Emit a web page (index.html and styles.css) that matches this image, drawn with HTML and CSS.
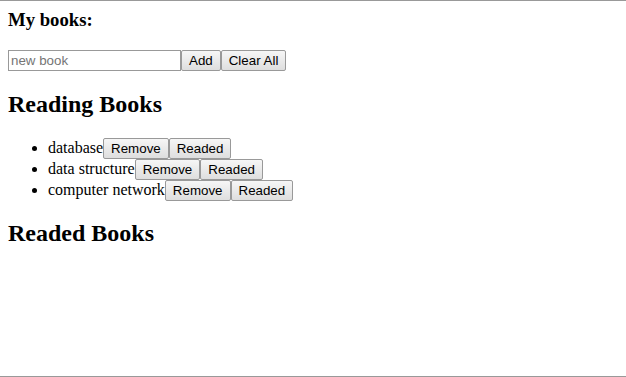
FILE: index.html
```html
<html>
<head>
    <title>My books</title>
    <link rel="stylesheet" href="styles.css">
</head>
<body>
<div class="page">
    <h3>My books:</h3>
    <div class="add-form">
        <input type="text" placeholder="new book"><button>Add</button><button>Clear All</button>
    </div>
    <h2>Reading Books</h2>
    <ul>
        <li>database<button>Remove</button><button>Readed</button></li>
        <li>data structure<button>Remove</button><button>Readed</button></li>
        <li>computer network<button>Remove</button><button>Readed</button></li>
    </ul>
    <h2>Readed Books</h2>
    <ul></ul>
</div>
</body>
</html>
```

FILE: styles.css
```css
html, body {
    margin: 0;
    font-family: "Liberation Serif", serif;
}

.page {
    height: 377px;
    box-sizing: border-box;
    border-top: 1px solid #999;
    border-bottom: 1px solid #999;
    padding: 0 8px;
}

h3 {
    margin: 0 0 18.72px;
    padding-top: 8px;
}

input, button {
    font: 13.33px "Liberation Sans", sans-serif;
}

input {
    width: 173px;
    box-sizing: border-box;
    height: 21px;
    border: 1px solid #999;
    padding: 1px 2px;
}

button {
    height: 21px;
    padding: 1px 7px;
    border: 1px solid #999;
    border-radius: 2px;
    background: linear-gradient(#f6f6f6, #dedede);
    color: #000;
}
```
